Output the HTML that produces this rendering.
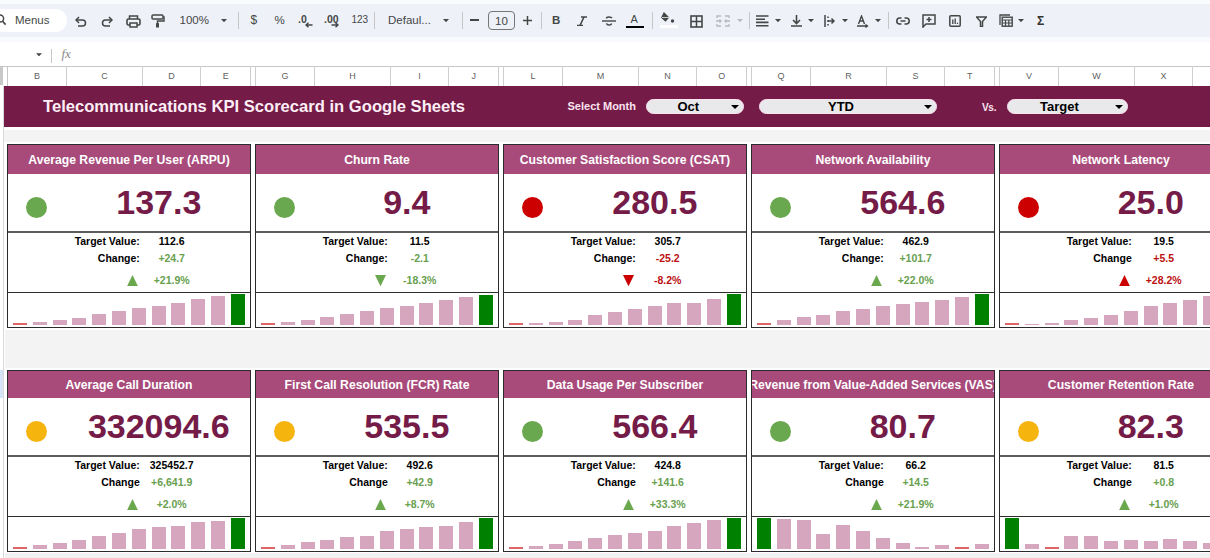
<!DOCTYPE html>
<html><head><meta charset="utf-8">
<style>
*{box-sizing:border-box;margin:0;padding:0}
html,body{width:1210px;height:558px;overflow:hidden;background:#fff;font-family:"Liberation Sans",sans-serif}
.a{position:absolute}
.tb{color:#444746}
.card{position:absolute;width:244px;background:#fff;overflow:hidden}
.bd{position:absolute;left:0;top:0;right:0;bottom:0;border:1px solid #2b2b2b}
.hd{position:absolute;background:#a84b7b;color:#fff;font-weight:bold;font-size:12.2px;display:flex;justify-content:center;align-items:center;white-space:nowrap}
.hl{position:absolute;left:0;right:0}
.num{position:absolute;font-weight:bold;font-size:34px;color:#741b47;white-space:nowrap;text-align:center;width:300px}
.lbl{position:absolute;font-weight:bold;font-size:10.5px;color:#000;white-space:nowrap;text-align:right;width:100px}
.val{position:absolute;font-weight:bold;font-size:10.5px;white-space:nowrap;text-align:center;width:100px}
.bar{position:absolute;width:14.2px;background:#d5a6bd}
.circ{position:absolute;width:21px;height:21px;border-radius:50%}
.colh{position:absolute;top:65.5px;height:20px;font-size:9px;color:#5f5f5f;display:flex;align-items:center;justify-content:center}
.vl{position:absolute;top:66px;width:1px;height:20px;background:#cfcfcf}
</style></head><body>

<div class="a" style="left:0;top:0;width:1210px;height:4px;background:#f9fbfd"></div>
<div class="a" style="left:0;top:4px;width:1210px;height:32.5px;background:#eef1f8"></div>
<div class="a" style="left:0;top:36.5px;width:1210px;height:5.5px;background:#f8fafd"></div>
<div class="a" style="left:-20px;top:9px;width:87px;height:23px;border-radius:12px;background:#fff"></div>
<svg class="a" style="left:0;top:14px" width="8" height="12" viewBox="0 0 8 12"><circle cx="0" cy="4.5" r="3.6" fill="none" stroke="#444746" stroke-width="1.5"/><path d="M2.6 7.2 L5.6 10.6" stroke="#444746" stroke-width="1.6"/></svg>
<div class="a tb" style="left:15px;top:13px;font-size:11.5px;line-height:14px">Menus</div>
<svg class="a" style="left:75px;top:16px" width="12" height="11" viewBox="0 0 12 11"><path d="M4 1 L1 4 L4 7" fill="none" stroke="#444746" stroke-width="1.5"/><path d="M1.5 4 H7.5 A3 3 0 0 1 7.5 10 H3" fill="none" stroke="#444746" stroke-width="1.5"/></svg>
<svg class="a" style="left:101px;top:16px" width="12" height="11" viewBox="0 0 12 11"><path d="M8 1 L11 4 L8 7" fill="none" stroke="#444746" stroke-width="1.5"/><path d="M10.5 4 H4.5 A3 3 0 0 0 4.5 10 H9" fill="none" stroke="#444746" stroke-width="1.5"/></svg>
<svg class="a" style="left:126px;top:15px" width="15" height="13" viewBox="0 0 15 13"><path d="M3.5 4 V1 H11.5 V4" fill="none" stroke="#444746" stroke-width="1.5"/><rect x="1" y="4" width="13" height="6" rx="1.5" fill="none" stroke="#444746" stroke-width="1.6"/><rect x="4" y="8" width="7" height="4" fill="#eef1f8" stroke="#444746" stroke-width="1.5"/></svg>
<svg class="a" style="left:151px;top:14px" width="14" height="14" viewBox="0 0 14 14"><rect x="1" y="1" width="11" height="4" rx="1" fill="none" stroke="#444746" stroke-width="1.5"/><path d="M12 3 H13 V7 H6.5 V9" fill="none" stroke="#444746" stroke-width="1.4"/><rect x="5" y="9" width="3" height="4.5" rx="0.5" fill="#444746"/></svg>
<div class="a tb" style="left:179.5px;top:13px;font-size:11.5px;line-height:14px">100%</div>
<svg class="a" style="left:221px;top:19.3px" width="6" height="3.2" viewBox="0 0 6 3.2"><path d="M0 0 H6 L3 3.2Z" fill="#444746"/></svg>
<div class="a" style="left:238px;top:12px;width:1px;height:17px;background:#c7c7c7"></div>
<div class="a tb" style="left:250.5px;top:13px;font-size:12px;line-height:14px">$</div>
<div class="a tb" style="left:274.5px;top:13px;font-size:11.5px;line-height:14px">%</div>
<div class="a tb" style="left:298px;top:12px;font-size:10.5px;font-weight:bold;line-height:14px">.0</div>
<svg class="a" style="left:305px;top:22px" width="8" height="6" viewBox="0 0 8 6"><path d="M7.5 3 H1.5 M3.5 0.8 L1 3 L3.5 5.2" fill="none" stroke="#444746" stroke-width="1.4"/></svg>
<div class="a tb" style="left:324px;top:12px;font-size:10.5px;font-weight:bold;line-height:14px">.00</div>
<svg class="a" style="left:331px;top:22px" width="8" height="6" viewBox="0 0 8 6"><path d="M0.5 3 H6.5 M4.5 0.8 L7 3 L4.5 5.2" fill="none" stroke="#444746" stroke-width="1.4"/></svg>
<div class="a tb" style="left:351.5px;top:13.5px;font-size:10px;line-height:12px">123</div>
<div class="a" style="left:374px;top:12px;width:1px;height:17px;background:#c7c7c7"></div>
<div class="a tb" style="left:388px;top:13px;font-size:11.5px;line-height:14px">Defaul...</div>
<svg class="a" style="left:442.5px;top:19.3px" width="6" height="3.2" viewBox="0 0 6 3.2"><path d="M0 0 H6 L3 3.2Z" fill="#444746"/></svg>
<div class="a" style="left:461.5px;top:12px;width:1px;height:17px;background:#c7c7c7"></div>
<div class="a" style="left:470px;top:19.3px;width:9px;height:1.5px;background:#444746"></div>
<div class="a" style="left:487.5px;top:11.2px;width:27px;height:19.3px;border:1px solid #747775;border-radius:4px"></div>
<div class="a tb" style="left:495px;top:13.5px;font-size:11.5px;line-height:14px">10</div>
<svg class="a" style="left:522.5px;top:15.5px" width="9" height="9" viewBox="0 0 9 9"><path d="M4.5 0 V9 M0 4.5 H9" stroke="#444746" stroke-width="1.5"/></svg>
<div class="a" style="left:540.5px;top:12px;width:1px;height:17px;background:#c7c7c7"></div>
<div class="a tb" style="left:552px;top:13px;font-size:11.5px;font-weight:bold;line-height:14px">B</div>
<svg class="a" style="left:577px;top:15.5px" width="10" height="10" viewBox="0 0 10 10"><path d="M4 1 H10 M0 9.5 H6 M7 1 L3 9.5" fill="none" stroke="#444746" stroke-width="1.6"/></svg>
<svg class="a" style="left:601.5px;top:15.5px" width="14" height="10" viewBox="0 0 14 10"><path d="M0 5 H14" stroke="#444746" stroke-width="1.4"/><path d="M10 2.2 C9 0.5 4.5 0.5 4.5 2.5" fill="none" stroke="#444746" stroke-width="1.5"/><path d="M4.5 7.3 C5 9.5 9.5 9.5 9.5 7.5" fill="none" stroke="#444746" stroke-width="1.5"/></svg>
<div class="a tb" style="left:630.5px;top:13.5px;font-size:11px;line-height:11px">A</div>
<div class="a" style="left:626px;top:25.5px;width:18px;height:2.6px;background:#000"></div>
<div class="a" style="left:651.5px;top:12px;width:1px;height:17px;background:#c7c7c7"></div>
<svg class="a" style="left:661px;top:12px" width="14" height="12" viewBox="0 0 14 12"><path d="M3 1 L7.5 5.5 L4.5 9 L0.8 5.5 Z" fill="#444746" stroke="#444746" stroke-width="1.2"/><path d="M1 5.5 H8" stroke="#eef1f8" stroke-width="0.8"/><circle cx="11.5" cy="9" r="1.7" fill="#444746"/></svg>
<div class="a" style="left:660px;top:24.5px;width:18px;height:3px;background:#fff"></div>
<svg class="a" style="left:689.5px;top:14.5px" width="13" height="13" viewBox="0 0 13 13"><rect x="1" y="1" width="11" height="11" fill="none" stroke="#444746" stroke-width="1.6"/><path d="M6.5 1 V12 M1 6.5 H12" stroke="#444746" stroke-width="1.5"/></svg>
<svg class="a" style="left:716px;top:15px" width="14" height="12" viewBox="0 0 14 12"><path d="M1 3 V1 H5 M9 1 H13 V3 M1 9 V11 H5 M9 11 H13 V9 M0 6 H5 M3.5 4.5 L5 6 L3.5 7.5 M14 6 H9 M10.5 4.5 L9 6 L10.5 7.5" fill="none" stroke="#b7b9bc" stroke-width="1.3"/></svg>
<svg class="a" style="left:737px;top:19.3px" width="6" height="3.2" viewBox="0 0 6 3.2"><path d="M0 0 H6 L3 3.2Z" fill="#b7b9bc"/></svg>
<div class="a" style="left:748.5px;top:12px;width:1px;height:17px;background:#c7c7c7"></div>
<svg class="a" style="left:756px;top:15px" width="13" height="12" viewBox="0 0 13 12"><path d="M0 1 H12.5 M0 4.2 H9 M0 7.4 H12.5 M0 10.8 H12.5" stroke="#444746" stroke-width="1.6"/></svg>
<svg class="a" style="left:774.5px;top:19.3px" width="6" height="3.2" viewBox="0 0 6 3.2"><path d="M0 0 H6 L3 3.2Z" fill="#444746"/></svg>
<svg class="a" style="left:790.5px;top:15px" width="11" height="12" viewBox="0 0 11 12"><path d="M5.5 0 V8 M2 5 L5.5 8.5 L9 5 M0 11 H11" fill="none" stroke="#444746" stroke-width="1.6"/></svg>
<svg class="a" style="left:808px;top:19.3px" width="6" height="3.2" viewBox="0 0 6 3.2"><path d="M0 0 H6 L3 3.2Z" fill="#444746"/></svg>
<svg class="a" style="left:823.5px;top:15px" width="11" height="12" viewBox="0 0 11 12"><path d="M1 0 V12 M4 1.5 V3 M4 5 V7 M4 9 V10.5 M4 6 H10 M7.5 3.5 L10 6 L7.5 8.5" fill="none" stroke="#444746" stroke-width="1.5"/></svg>
<svg class="a" style="left:841.5px;top:19.3px" width="6" height="3.2" viewBox="0 0 6 3.2"><path d="M0 0 H6 L3 3.2Z" fill="#444746"/></svg>
<svg class="a" style="left:857px;top:15px" width="12" height="13" viewBox="0 0 12 13"><path d="M1.5 9 L4.5 1 L7.5 9 M2.6 6 H6.4" fill="none" stroke="#444746" stroke-width="1.4"/><path d="M0 11 H10 M8.5 9.5 L10.5 11 L8.5 12.5" fill="none" stroke="#444746" stroke-width="1.3"/></svg>
<svg class="a" style="left:875px;top:19.3px" width="6" height="3.2" viewBox="0 0 6 3.2"><path d="M0 0 H6 L3 3.2Z" fill="#444746"/></svg>
<div class="a" style="left:887.5px;top:12px;width:1px;height:17px;background:#c7c7c7"></div>
<svg class="a" style="left:896px;top:17px" width="14" height="8" viewBox="0 0 14 8"><path d="M5.5 1 H3.8 A2.8 2.8 0 0 0 3.8 7 H5.5 M8.5 1 H10.2 A2.8 2.8 0 0 1 10.2 7 H8.5 M4.5 4 H9.5" fill="none" stroke="#444746" stroke-width="1.6"/></svg>
<svg class="a" style="left:922px;top:14px" width="14" height="14" viewBox="0 0 14 14"><path d="M1 1 H13 V10 H4 L1 13 Z" fill="none" stroke="#444746" stroke-width="1.5"/><path d="M7 3 V8 M4.5 5.5 H9.5" stroke="#444746" stroke-width="1.5"/></svg>
<svg class="a" style="left:949px;top:15px" width="12" height="12" viewBox="0 0 12 12"><rect x="0.8" y="0.8" width="10.4" height="10.4" rx="1" fill="none" stroke="#444746" stroke-width="1.5"/><path d="M3.8 4.5 V9 M6.2 3.5 V9 M8.5 7.8 V9" stroke="#444746" stroke-width="1.3"/></svg>
<svg class="a" style="left:975.5px;top:15.5px" width="11" height="11" viewBox="0 0 11 11"><path d="M0.5 1 H10.5 L6.5 5.5 V10.5 H4.5 V5.5 Z" fill="none" stroke="#444746" stroke-width="1.5"/></svg>
<svg class="a" style="left:998.5px;top:14px" width="14" height="13" viewBox="0 0 14 13"><path d="M1 11 V1 H11" fill="none" stroke="#444746" stroke-width="1.3"/><rect x="3.2" y="3.2" width="10" height="9" fill="none" stroke="#444746" stroke-width="1.4"/><path d="M3.2 6 H13.2 M6.5 6 V12 M9.8 6 V12 M3.2 9 H13.2" stroke="#444746" stroke-width="1.2"/></svg>
<svg class="a" style="left:1018px;top:19.3px" width="6" height="3.2" viewBox="0 0 6 3.2"><path d="M0 0 H6 L3 3.2Z" fill="#444746"/></svg>
<div class="a tb" style="left:1037px;top:15px;font-size:12px;font-weight:bold;line-height:13px;color:#333">&Sigma;</div>
<svg class="a" style="left:36px;top:52.8px" width="6" height="3.5" viewBox="0 0 6 3.2"><path d="M0 0 H6 L3 3.2Z" fill="#444746"/></svg>
<div class="a" style="left:51px;top:48.5px;width:1px;height:14px;background:#c7c7c7"></div>
<div class="a" style="left:61.5px;top:47px;font-family:'Liberation Serif',serif;font-style:italic;font-size:13px;color:#888;line-height:14px">fx</div>
<div class="a" style="left:0;top:66px;width:1210px;height:1px;background:#c7c7c7"></div>
<div class="a" style="left:0;top:67px;width:2.5px;height:18px;background:#c8c8c8"></div>
<div class="a" style="left:7px;top:66px;width:1px;height:20px;background:#c7c7c7"></div>
<div class="colh" style="left:7.3px;width:59.3px">B</div>
<div class="vl" style="left:66.1px"></div>
<div class="colh" style="left:66.6px;width:75.9px">C</div>
<div class="vl" style="left:142px"></div>
<div class="colh" style="left:142.5px;width:58.2px">D</div>
<div class="vl" style="left:200.2px"></div>
<div class="colh" style="left:200.7px;width:50px">E</div>
<div class="vl" style="left:250.2px"></div>
<div class="vl" style="left:254.8px"></div>
<div class="colh" style="left:255.3px;width:59.3px">G</div>
<div class="vl" style="left:314.1px"></div>
<div class="colh" style="left:314.6px;width:75.9px">H</div>
<div class="vl" style="left:390px"></div>
<div class="colh" style="left:390.5px;width:58.2px">I</div>
<div class="vl" style="left:448.2px"></div>
<div class="colh" style="left:448.7px;width:50px">J</div>
<div class="vl" style="left:498.2px"></div>
<div class="vl" style="left:502.8px"></div>
<div class="colh" style="left:503.3px;width:59.3px">L</div>
<div class="vl" style="left:562.1px"></div>
<div class="colh" style="left:562.6px;width:75.9px">M</div>
<div class="vl" style="left:638px"></div>
<div class="colh" style="left:638.5px;width:58.2px">N</div>
<div class="vl" style="left:696.2px"></div>
<div class="colh" style="left:696.7px;width:50px">O</div>
<div class="vl" style="left:746.2px"></div>
<div class="vl" style="left:750.8px"></div>
<div class="colh" style="left:751.3px;width:59.3px">Q</div>
<div class="vl" style="left:810.1px"></div>
<div class="colh" style="left:810.6px;width:75.9px">R</div>
<div class="vl" style="left:886px"></div>
<div class="colh" style="left:886.5px;width:58.2px">S</div>
<div class="vl" style="left:944.2px"></div>
<div class="colh" style="left:944.7px;width:50px">T</div>
<div class="vl" style="left:994.2px"></div>
<div class="vl" style="left:998.8px"></div>
<div class="colh" style="left:999.3px;width:59.3px">V</div>
<div class="vl" style="left:1058.1px"></div>
<div class="colh" style="left:1058.6px;width:75.9px">W</div>
<div class="vl" style="left:1134px"></div>
<div class="colh" style="left:1134.5px;width:58.2px">X</div>
<div class="vl" style="left:1192.2px"></div>
<div class="colh" style="left:1192.7px;width:50px">Y</div>
<div class="vl" style="left:1242.2px"></div>
<div class="vl" style="left:1246.8px"></div>
<div class="a" style="left:3px;top:86px;width:1207px;height:40.7px;background:#741b47"></div>
<div class="a" style="left:43px;top:96.9px;font-size:16.6px;font-weight:bold;color:#fdeef6;line-height:19px;white-space:nowrap">Telecommunications KPI Scorecard in Google Sheets</div>
<div class="a" style="left:567.5px;top:100px;font-size:11px;font-weight:bold;color:#fbe3f0;line-height:13px;letter-spacing:0px;white-space:nowrap">Select Month</div>
<div class="a" style="left:646px;top:99px;width:98px;height:15.3px;border-radius:8px;background:#e9e9ec;border:1px solid #fbe3f0"></div>
<div class="a" style="left:677.5px;top:98.6px;font-size:13px;font-weight:bold;color:#000;line-height:15px;white-space:nowrap">Oct</div>
<svg class="a" style="left:730.5px;top:104.5px" width="8" height="4" viewBox="0 0 8 4"><path d="M0 0 H8 L4 4Z" fill="#000"/></svg>
<div class="a" style="left:759px;top:99px;width:178px;height:15.3px;border-radius:8px;background:#e9e9ec;border:1px solid #fbe3f0"></div>
<div class="a" style="left:828px;top:98.6px;font-size:13px;font-weight:bold;color:#000;line-height:15px;white-space:nowrap">YTD</div>
<svg class="a" style="left:923.5px;top:104.5px" width="8" height="4" viewBox="0 0 8 4"><path d="M0 0 H8 L4 4Z" fill="#000"/></svg>
<div class="a" style="left:982px;top:101px;font-size:10px;font-weight:bold;color:#fbe3f0;line-height:13px;letter-spacing:-0.3px">Vs.</div>
<div class="a" style="left:1007px;top:99px;width:121px;height:15.3px;border-radius:8px;background:#e9e9ec;border:1px solid #fbe3f0"></div>
<div class="a" style="left:1040px;top:98.6px;font-size:13px;font-weight:bold;color:#000;line-height:15px;white-space:nowrap">Target</div>
<svg class="a" style="left:1114.5px;top:104.5px" width="8" height="4" viewBox="0 0 8 4"><path d="M0 0 H8 L4 4Z" fill="#000"/></svg>
<div class="a" style="left:3px;top:126.7px;width:1207px;height:432px;background:#fff"></div>
<div class="a" style="left:3px;top:129.5px;width:1207px;height:12px;background:#f3f3f3"></div>
<div class="a" style="left:5px;top:329.5px;width:1207px;height:38px;background:#f3f3f3"></div>
<div class="a" style="left:5px;top:553px;width:1207px;height:6px;background:#f1f1f1"></div>
<div class="a" style="left:0;top:126.7px;width:2.5px;height:432px;background:#fff"></div>
<div class="a" style="left:2.5px;top:86px;width:0.8px;height:472px;background:#d9d9d9"></div>
<div class="a" style="left:0;top:370px;width:2.5px;height:28px;background:#d6e2f5"></div>
<div class="card" style="left:7px;top:144px;height:184px">
<div class="hd" style="left:1px;right:1px;top:1px;height:29px">Average Revenue Per User (ARPU)</div>
<div class="hl" style="top:87px;height:2px;background:#5c5c5c"></div>
<div class="hl" style="top:148px;height:1px;background:#2e2e2e"></div>
<div class="circ" style="left:19px;top:53.2px;background:#6aa84f"></div>
<div class="num" style="left:1.8px;top:39.1px;line-height:38px">137.3</div>
<div class="lbl" style="left:32.8px;top:91.2px;line-height:12px">Target Value:</div>
<div class="val" style="left:114.7px;top:91.2px;line-height:12px;color:#000">112.6</div>
<div class="lbl" style="left:32.8px;top:108px;line-height:12px">Change:</div>
<div class="val" style="left:114.7px;top:108px;line-height:12px;color:#68a04f">+24.7</div>
<svg class="a" style="left:119.5px;top:130.8px" width="11" height="11.3" viewBox="0 0 11 11.3"><path d="M5.5 0 L11 11.3 H0Z" fill="#6aa84f"/></svg>
<div class="val" style="left:114.7px;top:130.1px;line-height:12px;color:#68a04f">+21.9%</div>
<div class="bar" style="left:6px;top:179px;height:1.8px;background:#e06666"></div>
<div class="bar" style="left:25.8px;top:178px;height:2.8px;background:#d5a6bd"></div>
<div class="bar" style="left:45.6px;top:176px;height:4.8px;background:#d5a6bd"></div>
<div class="bar" style="left:65.3px;top:173.5px;height:7.3px;background:#d5a6bd"></div>
<div class="bar" style="left:85.1px;top:170px;height:10.8px;background:#d5a6bd"></div>
<div class="bar" style="left:104.9px;top:167px;height:13.8px;background:#d5a6bd"></div>
<div class="bar" style="left:124.7px;top:163.9px;height:16.9px;background:#d5a6bd"></div>
<div class="bar" style="left:144.5px;top:161.9px;height:18.9px;background:#d5a6bd"></div>
<div class="bar" style="left:164.2px;top:158.9px;height:21.9px;background:#d5a6bd"></div>
<div class="bar" style="left:184px;top:154.7px;height:26.1px;background:#d5a6bd"></div>
<div class="bar" style="left:203.8px;top:151.8px;height:29px;background:#d5a6bd"></div>
<div class="bar" style="left:223.6px;top:150.3px;height:30.5px;background:#008000"></div>
<div class="bd"></div></div>
<div class="card" style="left:255px;top:144px;height:184px">
<div class="hd" style="left:1px;right:1px;top:1px;height:29px">Churn Rate</div>
<div class="hl" style="top:87px;height:2px;background:#5c5c5c"></div>
<div class="hl" style="top:148px;height:1px;background:#2e2e2e"></div>
<div class="circ" style="left:19px;top:53.2px;background:#6aa84f"></div>
<div class="num" style="left:1.8px;top:39.1px;line-height:38px">9.4</div>
<div class="lbl" style="left:32.8px;top:91.2px;line-height:12px">Target Value:</div>
<div class="val" style="left:114.7px;top:91.2px;line-height:12px;color:#000">11.5</div>
<div class="lbl" style="left:32.8px;top:108px;line-height:12px">Change:</div>
<div class="val" style="left:114.7px;top:108px;line-height:12px;color:#68a04f">-2.1</div>
<svg class="a" style="left:119.5px;top:130.8px" width="11" height="11.3" viewBox="0 0 11 11.3"><path d="M0 0 H11 L5.5 11.3Z" fill="#6aa84f"/></svg>
<div class="val" style="left:114.7px;top:130.1px;line-height:12px;color:#68a04f">-18.3%</div>
<div class="bar" style="left:6px;top:179px;height:1.8px;background:#e06666"></div>
<div class="bar" style="left:25.8px;top:178px;height:2.8px;background:#d5a6bd"></div>
<div class="bar" style="left:45.6px;top:176.1px;height:4.7px;background:#d5a6bd"></div>
<div class="bar" style="left:65.3px;top:173.2px;height:7.6px;background:#d5a6bd"></div>
<div class="bar" style="left:85.1px;top:170.1px;height:10.7px;background:#d5a6bd"></div>
<div class="bar" style="left:104.9px;top:167.3px;height:13.5px;background:#d5a6bd"></div>
<div class="bar" style="left:124.7px;top:164.2px;height:16.6px;background:#d5a6bd"></div>
<div class="bar" style="left:144.5px;top:162.2px;height:18.6px;background:#d5a6bd"></div>
<div class="bar" style="left:164.2px;top:159.3px;height:21.5px;background:#d5a6bd"></div>
<div class="bar" style="left:184px;top:156.3px;height:24.5px;background:#d5a6bd"></div>
<div class="bar" style="left:203.8px;top:153.4px;height:27.4px;background:#d5a6bd"></div>
<div class="bar" style="left:223.6px;top:150.5px;height:30.3px;background:#008000"></div>
<div class="bd"></div></div>
<div class="card" style="left:503px;top:144px;height:184px">
<div class="hd" style="left:1px;right:1px;top:1px;height:29px">Customer Satisfaction Score (CSAT)</div>
<div class="hl" style="top:87px;height:2px;background:#5c5c5c"></div>
<div class="hl" style="top:148px;height:1px;background:#2e2e2e"></div>
<div class="circ" style="left:19px;top:53.2px;background:#cc0000"></div>
<div class="num" style="left:1.8px;top:39.1px;line-height:38px">280.5</div>
<div class="lbl" style="left:32.8px;top:91.2px;line-height:12px">Target Value:</div>
<div class="val" style="left:114.7px;top:91.2px;line-height:12px;color:#000">305.7</div>
<div class="lbl" style="left:32.8px;top:108px;line-height:12px">Change:</div>
<div class="val" style="left:114.7px;top:108px;line-height:12px;color:#bb1111">-25.2</div>
<svg class="a" style="left:119.5px;top:130.8px" width="11" height="11.3" viewBox="0 0 11 11.3"><path d="M0 0 H11 L5.5 11.3Z" fill="#cc0000"/></svg>
<div class="val" style="left:114.7px;top:130.1px;line-height:12px;color:#bb1111">-8.2%</div>
<div class="bar" style="left:6px;top:179px;height:1.8px;background:#e06666"></div>
<div class="bar" style="left:25.8px;top:179.1px;height:1.7px;background:#d5a6bd"></div>
<div class="bar" style="left:45.6px;top:177.9px;height:2.9px;background:#d5a6bd"></div>
<div class="bar" style="left:65.3px;top:175.8px;height:5px;background:#d5a6bd"></div>
<div class="bar" style="left:85.1px;top:171.4px;height:9.4px;background:#d5a6bd"></div>
<div class="bar" style="left:104.9px;top:168px;height:12.8px;background:#d5a6bd"></div>
<div class="bar" style="left:124.7px;top:164.9px;height:15.9px;background:#d5a6bd"></div>
<div class="bar" style="left:144.5px;top:162.1px;height:18.7px;background:#d5a6bd"></div>
<div class="bar" style="left:164.2px;top:159.2px;height:21.6px;background:#d5a6bd"></div>
<div class="bar" style="left:184px;top:158.5px;height:22.3px;background:#d5a6bd"></div>
<div class="bar" style="left:203.8px;top:154.6px;height:26.2px;background:#d5a6bd"></div>
<div class="bar" style="left:223.6px;top:150.4px;height:30.4px;background:#008000"></div>
<div class="bd"></div></div>
<div class="card" style="left:751px;top:144px;height:184px">
<div class="hd" style="left:1px;right:1px;top:1px;height:29px">Network Availability</div>
<div class="hl" style="top:87px;height:2px;background:#5c5c5c"></div>
<div class="hl" style="top:148px;height:1px;background:#2e2e2e"></div>
<div class="circ" style="left:19px;top:53.2px;background:#6aa84f"></div>
<div class="num" style="left:1.8px;top:39.1px;line-height:38px">564.6</div>
<div class="lbl" style="left:32.8px;top:91.2px;line-height:12px">Target Value:</div>
<div class="val" style="left:114.7px;top:91.2px;line-height:12px;color:#000">462.9</div>
<div class="lbl" style="left:32.8px;top:108px;line-height:12px">Change:</div>
<div class="val" style="left:114.7px;top:108px;line-height:12px;color:#68a04f">+101.7</div>
<svg class="a" style="left:119.5px;top:130.8px" width="11" height="11.3" viewBox="0 0 11 11.3"><path d="M5.5 0 L11 11.3 H0Z" fill="#6aa84f"/></svg>
<div class="val" style="left:114.7px;top:130.1px;line-height:12px;color:#68a04f">+22.0%</div>
<div class="bar" style="left:6px;top:179px;height:1.8px;background:#e06666"></div>
<div class="bar" style="left:25.8px;top:176.2px;height:4.6px;background:#d5a6bd"></div>
<div class="bar" style="left:45.6px;top:172.9px;height:7.9px;background:#d5a6bd"></div>
<div class="bar" style="left:65.3px;top:170.7px;height:10.1px;background:#d5a6bd"></div>
<div class="bar" style="left:85.1px;top:167.2px;height:13.6px;background:#d5a6bd"></div>
<div class="bar" style="left:104.9px;top:165.2px;height:15.6px;background:#d5a6bd"></div>
<div class="bar" style="left:124.7px;top:162.1px;height:18.7px;background:#d5a6bd"></div>
<div class="bar" style="left:144.5px;top:160px;height:20.8px;background:#d5a6bd"></div>
<div class="bar" style="left:164.2px;top:158.3px;height:22.5px;background:#d5a6bd"></div>
<div class="bar" style="left:184px;top:156.2px;height:24.6px;background:#d5a6bd"></div>
<div class="bar" style="left:203.8px;top:153.3px;height:27.5px;background:#d5a6bd"></div>
<div class="bar" style="left:223.6px;top:150.4px;height:30.4px;background:#008000"></div>
<div class="bd"></div></div>
<div class="card" style="left:999px;top:144px;height:184px">
<div class="hd" style="left:1px;right:1px;top:1px;height:29px">Network Latency</div>
<div class="hl" style="top:87px;height:2px;background:#5c5c5c"></div>
<div class="hl" style="top:148px;height:1px;background:#2e2e2e"></div>
<div class="circ" style="left:19px;top:53.2px;background:#cc0000"></div>
<div class="num" style="left:1.8px;top:39.1px;line-height:38px">25.0</div>
<div class="lbl" style="left:32.8px;top:91.2px;line-height:12px">Target Value:</div>
<div class="val" style="left:114.7px;top:91.2px;line-height:12px;color:#000">19.5</div>
<div class="lbl" style="left:32.8px;top:108px;line-height:12px">Change</div>
<div class="val" style="left:114.7px;top:108px;line-height:12px;color:#bb1111">+5.5</div>
<svg class="a" style="left:119.5px;top:130.8px" width="11" height="11.3" viewBox="0 0 11 11.3"><path d="M5.5 0 L11 11.3 H0Z" fill="#cc0000"/></svg>
<div class="val" style="left:114.7px;top:130.1px;line-height:12px;color:#bb1111">+28.2%</div>
<div class="bar" style="left:6px;top:179px;height:1.8px;background:#e06666"></div>
<div class="bar" style="left:25.8px;top:179.6px;height:1.2px;background:#d5a6bd"></div>
<div class="bar" style="left:45.6px;top:179.1px;height:1.7px;background:#d5a6bd"></div>
<div class="bar" style="left:65.3px;top:176.2px;height:4.6px;background:#d5a6bd"></div>
<div class="bar" style="left:85.1px;top:174.2px;height:6.6px;background:#d5a6bd"></div>
<div class="bar" style="left:104.9px;top:170.7px;height:10.1px;background:#d5a6bd"></div>
<div class="bar" style="left:124.7px;top:167.1px;height:13.7px;background:#d5a6bd"></div>
<div class="bar" style="left:144.5px;top:162px;height:18.8px;background:#d5a6bd"></div>
<div class="bar" style="left:164.2px;top:158.5px;height:22.3px;background:#d5a6bd"></div>
<div class="bar" style="left:184px;top:155.6px;height:25.2px;background:#d5a6bd"></div>
<div class="bar" style="left:203.8px;top:152px;height:28.8px;background:#d5a6bd"></div>
<div class="bar" style="left:223.6px;top:150.3px;height:30.5px;background:#008000"></div>
<div class="bd"></div></div>
<div class="card" style="left:7px;top:370px;height:182px">
<div class="hd" style="left:1px;right:1px;top:1px;height:27px">Average Call Duration</div>
<div class="hl" style="top:85px;height:2px;background:#5c5c5c"></div>
<div class="hl" style="top:146px;height:1px;background:#2e2e2e"></div>
<div class="circ" style="left:19px;top:51.2px;background:#f6b40f"></div>
<div class="num" style="left:1.8px;top:37.1px;line-height:38px">332094.6</div>
<div class="lbl" style="left:32.8px;top:89.2px;line-height:12px">Target Value:</div>
<div class="val" style="left:114.7px;top:89.2px;line-height:12px;color:#000">325452.7</div>
<div class="lbl" style="left:32.8px;top:106px;line-height:12px">Change</div>
<div class="val" style="left:114.7px;top:106px;line-height:12px;color:#68a04f">+6,641.9</div>
<svg class="a" style="left:119.5px;top:128.8px" width="11" height="11.3" viewBox="0 0 11 11.3"><path d="M5.5 0 L11 11.3 H0Z" fill="#6aa84f"/></svg>
<div class="val" style="left:114.7px;top:128.1px;line-height:12px;color:#68a04f">+2.0%</div>
<div class="bar" style="left:6px;top:177px;height:1.8px;background:#e06666"></div>
<div class="bar" style="left:25.8px;top:175.2px;height:3.6px;background:#d5a6bd"></div>
<div class="bar" style="left:45.6px;top:172.9px;height:5.9px;background:#d5a6bd"></div>
<div class="bar" style="left:65.3px;top:170px;height:8.8px;background:#d5a6bd"></div>
<div class="bar" style="left:85.1px;top:166.1px;height:12.7px;background:#d5a6bd"></div>
<div class="bar" style="left:104.9px;top:162.8px;height:16px;background:#d5a6bd"></div>
<div class="bar" style="left:124.7px;top:159.1px;height:19.7px;background:#d5a6bd"></div>
<div class="bar" style="left:144.5px;top:157.3px;height:21.5px;background:#d5a6bd"></div>
<div class="bar" style="left:164.2px;top:155.5px;height:23.3px;background:#d5a6bd"></div>
<div class="bar" style="left:184px;top:152.4px;height:26.4px;background:#d5a6bd"></div>
<div class="bar" style="left:203.8px;top:151.1px;height:27.7px;background:#d5a6bd"></div>
<div class="bar" style="left:223.6px;top:148.3px;height:30.5px;background:#008000"></div>
<div class="bd"></div></div>
<div class="card" style="left:255px;top:370px;height:182px">
<div class="hd" style="left:1px;right:1px;top:1px;height:27px">First Call Resolution (FCR) Rate</div>
<div class="hl" style="top:85px;height:2px;background:#5c5c5c"></div>
<div class="hl" style="top:146px;height:1px;background:#2e2e2e"></div>
<div class="circ" style="left:19px;top:51.2px;background:#f6b40f"></div>
<div class="num" style="left:1.8px;top:37.1px;line-height:38px">535.5</div>
<div class="lbl" style="left:32.8px;top:89.2px;line-height:12px">Target Value:</div>
<div class="val" style="left:114.7px;top:89.2px;line-height:12px;color:#000">492.6</div>
<div class="lbl" style="left:32.8px;top:106px;line-height:12px">Change</div>
<div class="val" style="left:114.7px;top:106px;line-height:12px;color:#68a04f">+42.9</div>
<svg class="a" style="left:119.5px;top:128.8px" width="11" height="11.3" viewBox="0 0 11 11.3"><path d="M5.5 0 L11 11.3 H0Z" fill="#6aa84f"/></svg>
<div class="val" style="left:114.7px;top:128.1px;line-height:12px;color:#68a04f">+8.7%</div>
<div class="bar" style="left:6px;top:177px;height:1.8px;background:#e06666"></div>
<div class="bar" style="left:25.8px;top:175.2px;height:3.6px;background:#d5a6bd"></div>
<div class="bar" style="left:45.6px;top:172.1px;height:6.7px;background:#d5a6bd"></div>
<div class="bar" style="left:65.3px;top:170px;height:8.8px;background:#d5a6bd"></div>
<div class="bar" style="left:85.1px;top:166.9px;height:11.9px;background:#d5a6bd"></div>
<div class="bar" style="left:104.9px;top:165.7px;height:13.1px;background:#d5a6bd"></div>
<div class="bar" style="left:124.7px;top:161.2px;height:17.6px;background:#d5a6bd"></div>
<div class="bar" style="left:144.5px;top:159.1px;height:19.7px;background:#d5a6bd"></div>
<div class="bar" style="left:164.2px;top:157.3px;height:21.5px;background:#d5a6bd"></div>
<div class="bar" style="left:184px;top:155.5px;height:23.3px;background:#d5a6bd"></div>
<div class="bar" style="left:203.8px;top:152.1px;height:26.7px;background:#d5a6bd"></div>
<div class="bar" style="left:223.6px;top:148.3px;height:30.5px;background:#008000"></div>
<div class="bd"></div></div>
<div class="card" style="left:503px;top:370px;height:182px">
<div class="hd" style="left:1px;right:1px;top:1px;height:27px">Data Usage Per Subscriber</div>
<div class="hl" style="top:85px;height:2px;background:#5c5c5c"></div>
<div class="hl" style="top:146px;height:1px;background:#2e2e2e"></div>
<div class="circ" style="left:19px;top:51.2px;background:#6aa84f"></div>
<div class="num" style="left:1.8px;top:37.1px;line-height:38px">566.4</div>
<div class="lbl" style="left:32.8px;top:89.2px;line-height:12px">Target Value:</div>
<div class="val" style="left:114.7px;top:89.2px;line-height:12px;color:#000">424.8</div>
<div class="lbl" style="left:32.8px;top:106px;line-height:12px">Change</div>
<div class="val" style="left:114.7px;top:106px;line-height:12px;color:#68a04f">+141.6</div>
<svg class="a" style="left:119.5px;top:128.8px" width="11" height="11.3" viewBox="0 0 11 11.3"><path d="M5.5 0 L11 11.3 H0Z" fill="#6aa84f"/></svg>
<div class="val" style="left:114.7px;top:128.1px;line-height:12px;color:#68a04f">+33.3%</div>
<div class="bar" style="left:6px;top:177px;height:1.8px;background:#e06666"></div>
<div class="bar" style="left:25.8px;top:176.2px;height:2.6px;background:#d5a6bd"></div>
<div class="bar" style="left:45.6px;top:174.1px;height:4.7px;background:#d5a6bd"></div>
<div class="bar" style="left:65.3px;top:171.3px;height:7.5px;background:#d5a6bd"></div>
<div class="bar" style="left:85.1px;top:168.4px;height:10.4px;background:#d5a6bd"></div>
<div class="bar" style="left:104.9px;top:165px;height:13.8px;background:#d5a6bd"></div>
<div class="bar" style="left:124.7px;top:162.8px;height:16px;background:#d5a6bd"></div>
<div class="bar" style="left:144.5px;top:160.5px;height:18.3px;background:#d5a6bd"></div>
<div class="bar" style="left:164.2px;top:156.3px;height:22.5px;background:#d5a6bd"></div>
<div class="bar" style="left:184px;top:153.2px;height:25.6px;background:#d5a6bd"></div>
<div class="bar" style="left:203.8px;top:150.2px;height:28.6px;background:#d5a6bd"></div>
<div class="bar" style="left:223.6px;top:148.3px;height:30.5px;background:#008000"></div>
<div class="bd"></div></div>
<div class="card" style="left:751px;top:370px;height:182px">
<div class="hd" style="left:1px;right:1px;top:1px;height:27px">Revenue from Value-Added Services (VAS)</div>
<div class="hl" style="top:85px;height:2px;background:#5c5c5c"></div>
<div class="hl" style="top:146px;height:1px;background:#2e2e2e"></div>
<div class="circ" style="left:19px;top:51.2px;background:#6aa84f"></div>
<div class="num" style="left:1.8px;top:37.1px;line-height:38px">80.7</div>
<div class="lbl" style="left:32.8px;top:89.2px;line-height:12px">Target Value:</div>
<div class="val" style="left:114.7px;top:89.2px;line-height:12px;color:#000">66.2</div>
<div class="lbl" style="left:32.8px;top:106px;line-height:12px">Change</div>
<div class="val" style="left:114.7px;top:106px;line-height:12px;color:#68a04f">+14.5</div>
<svg class="a" style="left:119.5px;top:128.8px" width="11" height="11.3" viewBox="0 0 11 11.3"><path d="M5.5 0 L11 11.3 H0Z" fill="#6aa84f"/></svg>
<div class="val" style="left:114.7px;top:128.1px;line-height:12px;color:#68a04f">+21.9%</div>
<div class="bar" style="left:6px;top:148.3px;height:30.5px;background:#008000"></div>
<div class="bar" style="left:25.8px;top:149.1px;height:29.7px;background:#d5a6bd"></div>
<div class="bar" style="left:45.6px;top:150.2px;height:28.6px;background:#d5a6bd"></div>
<div class="bar" style="left:65.3px;top:164.3px;height:14.5px;background:#d5a6bd"></div>
<div class="bar" style="left:85.1px;top:155px;height:23.8px;background:#d5a6bd"></div>
<div class="bar" style="left:104.9px;top:160.7px;height:18.1px;background:#d5a6bd"></div>
<div class="bar" style="left:124.7px;top:167.9px;height:10.9px;background:#d5a6bd"></div>
<div class="bar" style="left:144.5px;top:173.1px;height:5.7px;background:#d5a6bd"></div>
<div class="bar" style="left:164.2px;top:177.2px;height:1.6px;background:#d5a6bd"></div>
<div class="bar" style="left:184px;top:175.2px;height:3.6px;background:#d5a6bd"></div>
<div class="bar" style="left:203.8px;top:177px;height:1.8px;background:#e06666"></div>
<div class="bar" style="left:223.6px;top:174.1px;height:4.7px;background:#d5a6bd"></div>
<div class="bd"></div></div>
<div class="card" style="left:999px;top:370px;height:182px">
<div class="hd" style="left:1px;right:1px;top:1px;height:27px">Customer Retention Rate</div>
<div class="hl" style="top:85px;height:2px;background:#5c5c5c"></div>
<div class="hl" style="top:146px;height:1px;background:#2e2e2e"></div>
<div class="circ" style="left:19px;top:51.2px;background:#f6b40f"></div>
<div class="num" style="left:1.8px;top:37.1px;line-height:38px">82.3</div>
<div class="lbl" style="left:32.8px;top:89.2px;line-height:12px">Target Value:</div>
<div class="val" style="left:114.7px;top:89.2px;line-height:12px;color:#000">81.5</div>
<div class="lbl" style="left:32.8px;top:106px;line-height:12px">Change</div>
<div class="val" style="left:114.7px;top:106px;line-height:12px;color:#68a04f">+0.8</div>
<svg class="a" style="left:119.5px;top:128.8px" width="11" height="11.3" viewBox="0 0 11 11.3"><path d="M5.5 0 L11 11.3 H0Z" fill="#6aa84f"/></svg>
<div class="val" style="left:114.7px;top:128.1px;line-height:12px;color:#68a04f">+1.0%</div>
<div class="bar" style="left:6px;top:148.3px;height:30.5px;background:#008000"></div>
<div class="bar" style="left:25.8px;top:173.9px;height:4.9px;background:#d5a6bd"></div>
<div class="bar" style="left:45.6px;top:177px;height:1.8px;background:#e06666"></div>
<div class="bar" style="left:65.3px;top:166.1px;height:12.7px;background:#d5a6bd"></div>
<div class="bar" style="left:85.1px;top:166.1px;height:12.7px;background:#d5a6bd"></div>
<div class="bar" style="left:104.9px;top:171px;height:7.8px;background:#d5a6bd"></div>
<div class="bar" style="left:124.7px;top:170.2px;height:8.6px;background:#d5a6bd"></div>
<div class="bar" style="left:144.5px;top:171.2px;height:7.6px;background:#d5a6bd"></div>
<div class="bar" style="left:164.2px;top:169.2px;height:9.6px;background:#d5a6bd"></div>
<div class="bar" style="left:184px;top:170.6px;height:8.2px;background:#d5a6bd"></div>
<div class="bar" style="left:203.8px;top:173.1px;height:5.7px;background:#d5a6bd"></div>
<div class="bar" style="left:223.6px;top:172.8px;height:6px;background:#d5a6bd"></div>
<div class="bd"></div></div>
</body></html>
